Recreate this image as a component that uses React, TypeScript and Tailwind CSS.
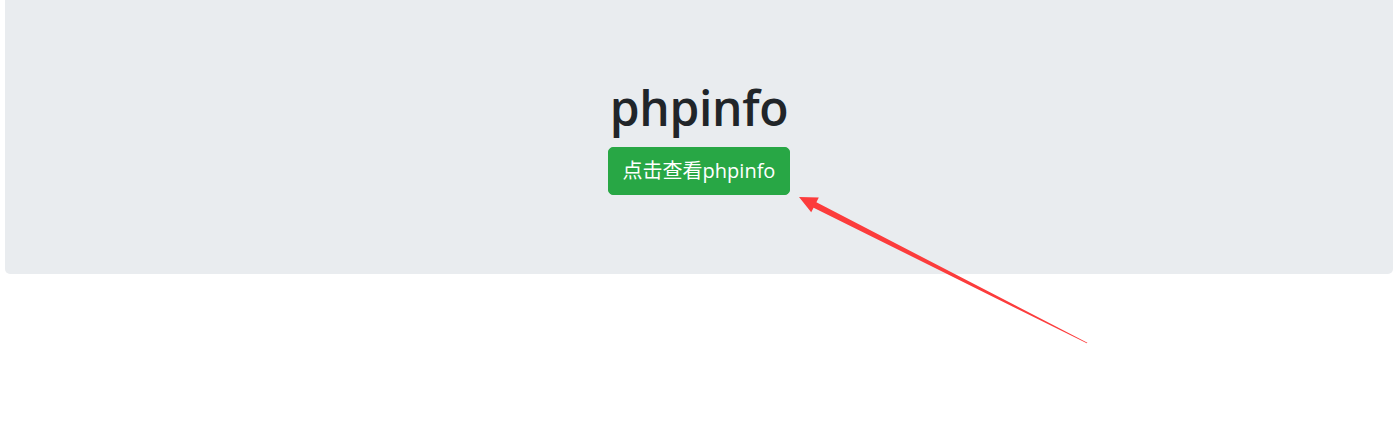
import React from 'react';

export default function App() {
  return (
    <div className="relative w-[1399px] h-[434px] bg-white overflow-hidden" style={{ fontFamily: '"Open Sans", "Noto Sans CJK SC", sans-serif' }}>
      <div className="pl-[5px] pr-[6px]">
        {/* Jumbotron */}
        <div className="h-[274px] bg-[#e9ecef] rounded-b-[5px] flex flex-col items-center pt-[79px]">
          <h1 className="text-[48px] leading-[1.2] font-semibold text-[#212529] tracking-[-0.3px]">phpinfo</h1>
          <button className="mt-[10px] h-[48px] px-[14px] border border-[#28a745] bg-[#28a745] text-white text-[20px] leading-[30px] rounded-[5px]">
            点击查看phpinfo
          </button>
        </div>
      </div>

      {/* annotation arrow */}
      <svg className="absolute left-0 top-0 pointer-events-none" width="1399" height="434" viewBox="0 0 1399 434">
        <polygon
          fill="#fc3c3c"
          points="799,197 818.8,197.6 816.4,202.3 1087.4,342.7 1086.8,343.3 813.6,207.7 811.2,212.3"
        />
      </svg>
    </div>
  );
}
